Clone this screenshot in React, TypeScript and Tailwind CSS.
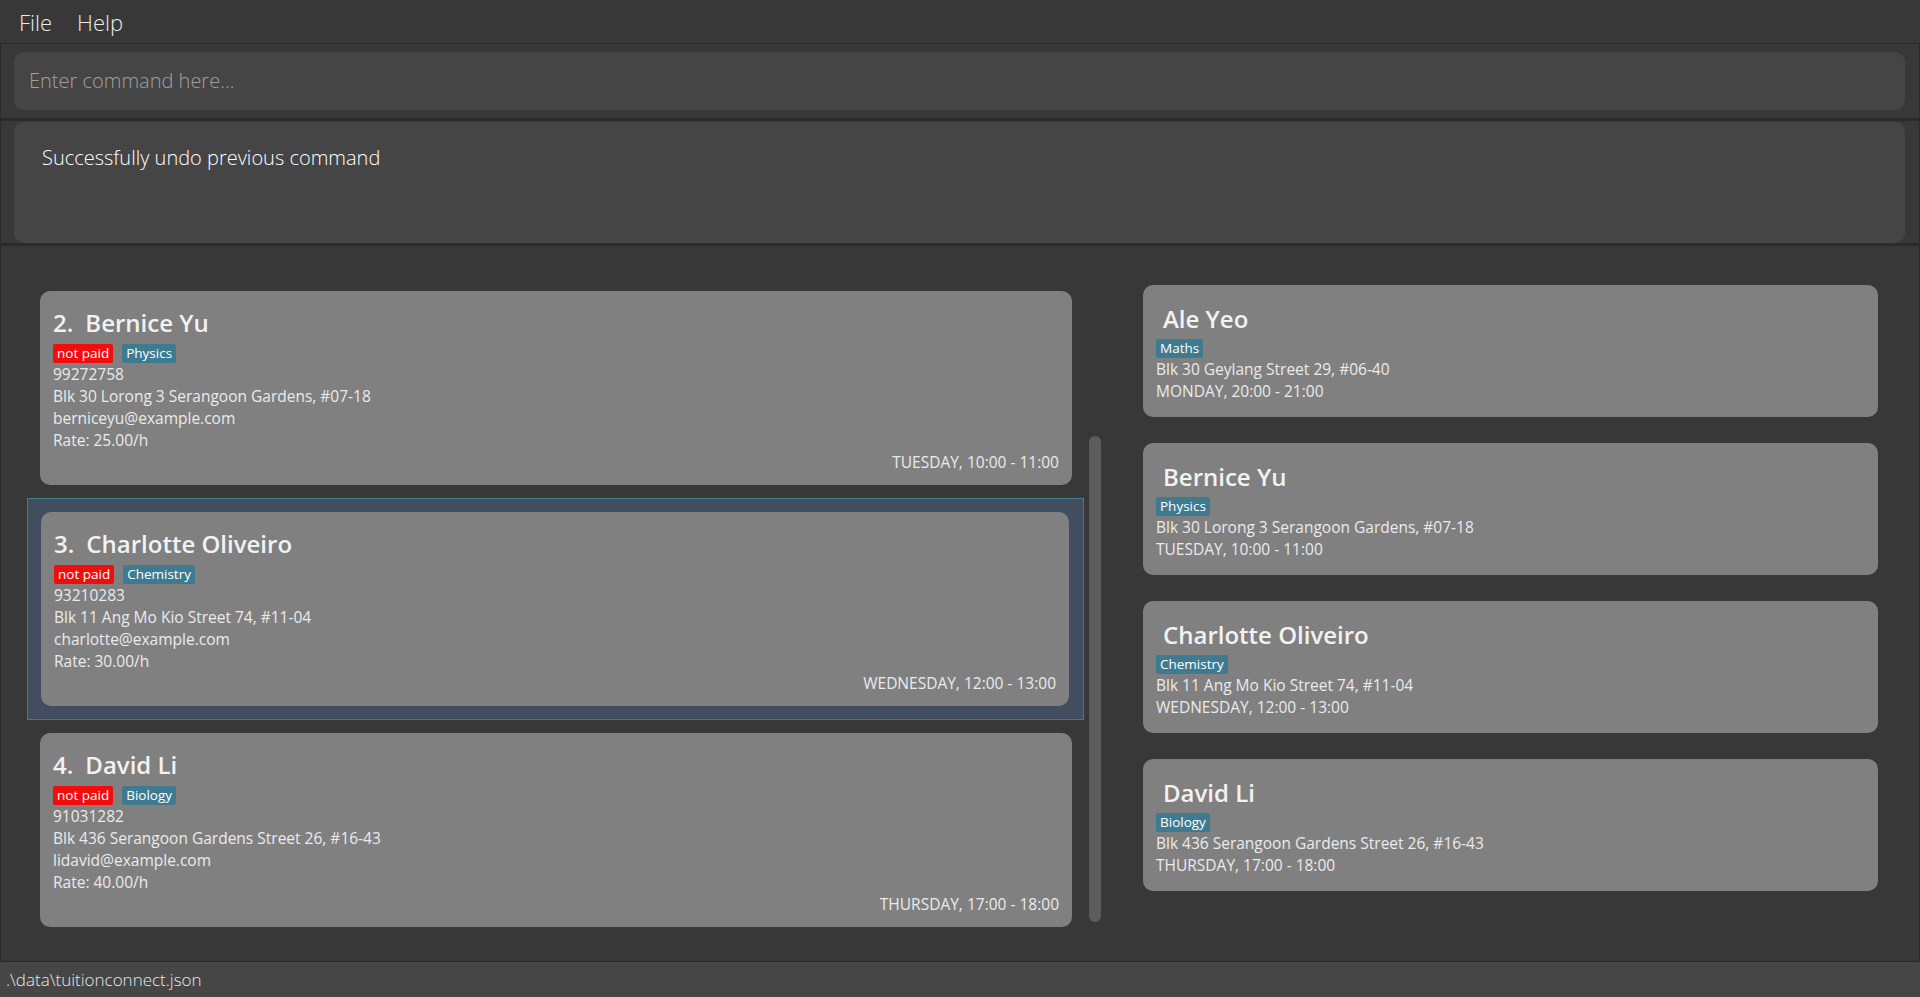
import React from "react";

type Student = {
  idx: number;
  name: string;
  subject: string;
  phone: string;
  address: string;
  email: string;
  rate: string;
  time: string;
};

const students: Student[] = [
  {
    idx: 2,
    name: "Bernice Yu",
    subject: "Physics",
    phone: "99272758",
    address: "Blk 30 Lorong 3 Serangoon Gardens, #07-18",
    email: "berniceyu@example.com",
    rate: "Rate: 25.00/h",
    time: "TUESDAY, 10:00 - 11:00",
  },
  {
    idx: 3,
    name: "Charlotte Oliveiro",
    subject: "Chemistry",
    phone: "93210283",
    address: "Blk 11 Ang Mo Kio Street 74, #11-04",
    email: "charlotte@example.com",
    rate: "Rate: 30.00/h",
    time: "WEDNESDAY, 12:00 - 13:00",
  },
  {
    idx: 4,
    name: "David Li",
    subject: "Biology",
    phone: "91031282",
    address: "Blk 436 Serangoon Gardens Street 26, #16-43",
    email: "lidavid@example.com",
    rate: "Rate: 40.00/h",
    time: "THURSDAY, 17:00 - 18:00",
  },
];

const schedule = [
  { name: "Ale Yeo", subject: "Maths", address: "Blk 30 Geylang Street 29, #06-40", time: "MONDAY, 20:00 - 21:00" },
  { name: "Bernice Yu", subject: "Physics", address: "Blk 30 Lorong 3 Serangoon Gardens, #07-18", time: "TUESDAY, 10:00 - 11:00" },
  { name: "Charlotte Oliveiro", subject: "Chemistry", address: "Blk 11 Ang Mo Kio Street 74, #11-04", time: "WEDNESDAY, 12:00 - 13:00" },
  { name: "David Li", subject: "Biology", address: "Blk 436 Serangoon Gardens Street 26, #16-43", time: "THURSDAY, 17:00 - 18:00" },
];

function Tag({ children, red }: { children: React.ReactNode; red?: boolean }) {
  return (
    <span
      className={
        "h-[19px] px-[4px] rounded-[2px] text-[13.5px] leading-[19px] text-white " +
        (red ? "bg-[#f20d0d]" : "bg-[#3e7b91]")
      }
    >
      {children}
    </span>
  );
}

function StudentCard({ s }: { s: Student }) {
  return (
    <div className="h-[194px] rounded-[10px] bg-[#808080] pl-[13px] pr-[13px] pt-[17px] pb-[12px] flex flex-col">
      <div className="h-[30px] leading-[30px] text-[24px] font-semibold text-[#f2f2f2] flex whitespace-nowrap">
        <span>{s.idx}.</span>
        <span className="ml-[12px]">{s.name}</span>
      </div>
      <div className="mt-[6px] flex gap-[9px]">
        <Tag red>not paid</Tag>
        <Tag>{s.subject}</Tag>
      </div>
      <div className="text-[15.5px] leading-[22px] text-[#ebebeb] whitespace-nowrap">
        <div>{s.phone}</div>
        <div>{s.address}</div>
        <div>{s.email}</div>
        <div>{s.rate}</div>
        <div className="text-right">{s.time}</div>
      </div>
    </div>
  );
}

export default function App() {
  return (
    <div className="w-[1920px] h-[997px] bg-[#383838] flex flex-col overflow-hidden font-['Open_Sans',sans-serif]">
      {/* Menu bar */}
      <div className="h-[44px] shrink-0 flex items-center pl-[19px] gap-[25px] border-b border-[#2b2b2b] text-[22px] leading-[28px] font-light text-[#ececec]">
        <span>File</span>
        <span>Help</span>
      </div>

      {/* Command box */}
      <div className="h-[74px] shrink-0 border-x border-[#2b2b2b] pt-[8px] pb-[7px] pl-[13px] pr-[14px]">
        <div className="h-[58px] rounded-[10px] bg-[#454545] flex items-center pl-[15px]">
          <input
            className="w-full bg-transparent outline-none text-[20px] leading-[28px] font-light text-white placeholder:text-[#a0a0a0]"
            placeholder="Enter command here..."
          />
        </div>
      </div>

      {/* Result display */}
      <div className="h-[128px] shrink-0 border-t-[3px] border-b-[3px] border-[#2b2b2b] pt-[1px] pl-[13px] pr-[14px] border-x border-x-[#2b2b2b]">
        <div className="h-[121px] rounded-[10px] bg-[#454545] pl-[28px] pt-[22px]">
          <div className="text-[20px] leading-[28px] font-light text-white">Successfully undo previous command</div>
        </div>
      </div>

      {/* Main */}
      <div className="flex-1 min-h-0 flex border-x border-[#2b2b2b] overflow-hidden">
        {/* Left list */}
        <div className="w-[1100px] shrink-0 flex pl-[26px]">
          <div className="w-[1057px] shrink-0 pt-[32px] flex flex-col">
            {students.map((s) =>
              s.idx === 3 ? (
                <div
                  key={s.idx}
                  className="border border-[#3e7b91] bg-[#424d5f] pl-[13px] pr-[14px] pt-[13px] pb-[13px]"
                >
                  <StudentCard s={s} />
                </div>
              ) : (
                <div key={s.idx} className="pl-[13px] pr-[12px] py-[13px]">
                  <StudentCard s={s} />
                </div>
              )
            )}
          </div>
          <div className="ml-[5px] w-[12px] shrink-0 pt-[190px]">
            <div className="h-[486px] w-[12px] rounded-[6px] bg-[#5c5c5c]" />
          </div>
        </div>

        {/* Right schedule */}
        <div className="w-[735px] shrink-0 ml-[42px] pt-[39px] flex flex-col gap-[26px]">
          {schedule.map((c) => (
            <div key={c.name} className="h-[132px] rounded-[10px] bg-[#808080] pl-[13px] pr-[13px] pt-[19px] flex flex-col">
              <div className="h-[30px] leading-[30px] text-[24px] font-semibold text-[#f2f2f2] pl-[7px] whitespace-nowrap">
                {c.name}
              </div>
              <div className="mt-[5px] flex">
                <Tag>{c.subject}</Tag>
              </div>
              <div className="text-[15.5px] leading-[22px] text-[#ebebeb] whitespace-nowrap">
                <div>{c.address}</div>
                <div>{c.time}</div>
              </div>
            </div>
          ))}
        </div>
      </div>

      {/* Status bar */}
      <div className="h-[36px] shrink-0 border-t border-[#2b2b2b] bg-[#464646] flex items-center pl-[6px] text-[17px] leading-[24px] font-light text-[#e8e8e8]">
        .\data\tuitionconnect.json
      </div>
    </div>
  );
}
